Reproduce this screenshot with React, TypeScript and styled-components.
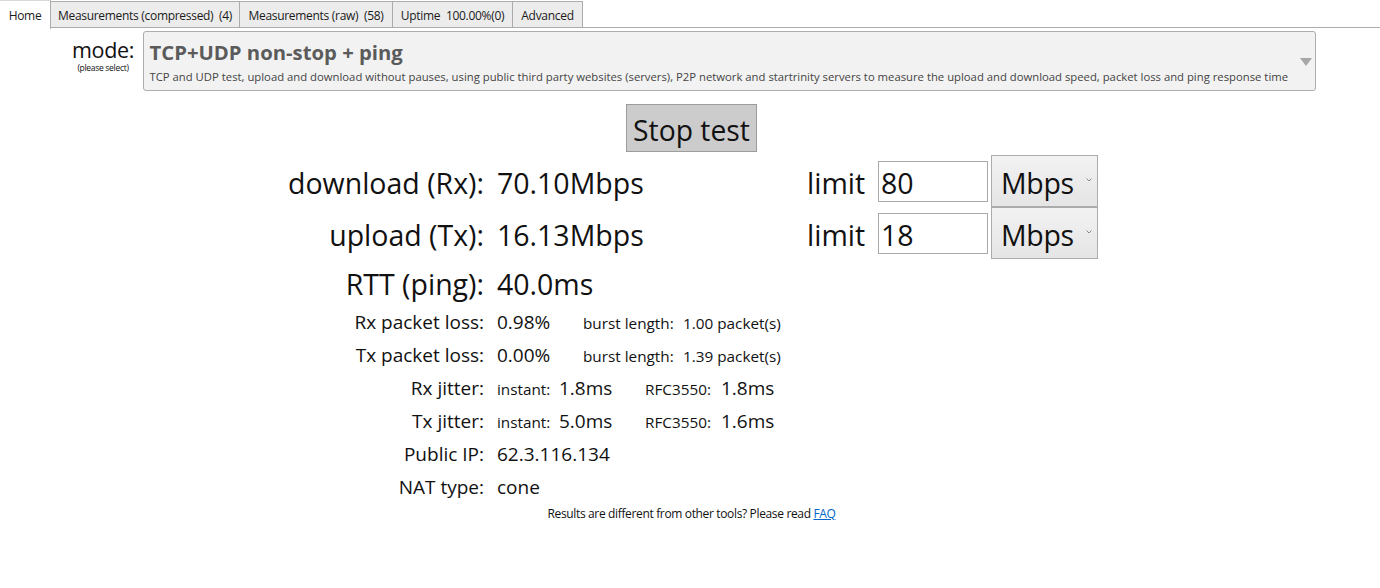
import React from "react";
import styled, { createGlobalStyle } from "styled-components";

const Global = createGlobalStyle`
  html, body { margin: 0; padding: 0; background: #ffffff; }
  body { font-family: "Open Sans", "Noto Sans", sans-serif; color: #111; }
`;

const Page = styled.div`
  width: 1380px;
  display: flex;
  flex-direction: column;
`;

const TabBar = styled.div`
  display: flex;
  align-items: flex-end;
  height: 28px;
`;

const Tab = styled.div<{ $w: number; $active?: boolean }>`
  box-sizing: border-box;
  width: ${(p) => p.$w}px;
  height: ${(p) => (p.$active ? 29 : 27)}px;
  display: flex;
  align-items: center;
  justify-content: center;
  font-size: 12px;
  letter-spacing: -0.3px;
  white-space: pre;
  color: #1a1a1a;
  background: ${(p) => (p.$active ? "#ffffff" : "#ececec")};
  border-top: 1px solid ${(p) => (p.$active ? "#d9d9d9" : "#acacac")};
  border-right: 1px solid #acacac;
  border-bottom: ${(p) => (p.$active ? "none" : "1px solid #acacac")};
  padding-top: ${(p) => (p.$active ? 0 : 1)}px;
  margin-bottom: ${(p) => (p.$active ? -1 : 0)}px;
  position: relative;
`;

const TabFill = styled.div`
  flex: 1;
  height: 1px;
  background: #acacac;
`;

const ModeRow = styled.div`
  align-self: center;
  display: flex;
  gap: 9px;
  margin-top: 3px;
  margin-left: 8px;
`;

const ModeLabel = styled.div`
  width: 61px;
  display: flex;
  flex-direction: column;
  align-items: center;
  padding-top: 6px;
`;

const ModeText = styled.div`
  font-size: 21.5px;
  line-height: 25px;
  letter-spacing: -0.3px;
`;

const ModeHint = styled.div`
  font-size: 8.5px;
  line-height: 12px;
  letter-spacing: -0.3px;
  white-space: nowrap;
`;

const ModeSelect = styled.div`
  box-sizing: border-box;
  width: 1173px;
  height: 60px;
  background: #f2f2f2;
  border: 1px solid #adadad;
  border-radius: 3px;
  padding: 7px 6px 0 6px;
  position: relative;
`;

const ModeTitle = styled.div`
  font-size: 20.3px;
  font-weight: 700;
  line-height: 27px;
  color: #5b5b5b;
`;

const ModeDesc = styled.div`
  font-size: 11.3px;
  line-height: 16px;
  margin-top: 3px;
  color: #444;
  white-space: nowrap;
`;

const ModeArrow = styled.div`
  position: absolute;
  right: 3px;
  top: 26px;
  width: 0;
  height: 0;
  border-left: 6px solid transparent;
  border-right: 6px solid transparent;
  border-top: 8px solid #a6a6a6;
`;

const StopButton = styled.button`
  align-self: center;
  box-sizing: border-box;
  margin-top: 13px;
  margin-left: 3px;
  width: 131px;
  height: 48px;
  background: #cccccc;
  border: 1px solid #9c9c9c;
  font-family: inherit;
  font-size: 28.3px;
  color: #111;
  padding: 3px 0 0;
  white-space: nowrap;
`;

const Results = styled.div`
  align-self: center;
  width: 816px;
  margin-top: 3px;
  display: flex;
  flex-direction: column;
`;

const Row = styled.div<{ $h: number; $shift?: number }>`
  height: ${(p) => p.$h}px;
  display: grid;
  grid-template-columns: 202px 323px 71px 110px 110px;
  align-items: center;
  & > * {
    padding-top: ${(p) => p.$shift ?? 0}px;
  }
`;

const Label = styled.div<{ $size: number }>`
  text-align: right;
  font-size: ${(p) => p.$size}px;
  white-space: nowrap;
`;

const Value = styled.div<{ $size: number }>`
  margin-left: 13px;
  font-size: ${(p) => p.$size}px;
  white-space: nowrap;
  display: flex;
  align-items: baseline;
`;

const Cell = styled.span<{ $w?: number; $size: number }>`
  display: inline-block;
  width: ${(p) => (p.$w ? `${p.$w}px` : "auto")};
  font-size: ${(p) => p.$size}px;
  white-space: nowrap;
`;

const LimitLabel = styled.div`
  font-size: 28.5px;
`;

const LimitInput = styled.input`
  box-sizing: border-box;
  width: 110px;
  height: 41px;
  border: 1px solid #a9a9a9;
  font-family: inherit;
  font-size: 28.5px;
  padding-left: 2px;
  padding-bottom: 0;
  color: #111;
  outline: none;
`;

const UnitSelect = styled.div`
  box-sizing: border-box;
  margin-left: 3px;
  width: 107px;
  height: 52px;
  border: 1px solid #acacac;
  background: linear-gradient(#f2f2f2, #e5e5e5);
  display: flex;
  align-items: center;
  padding-left: 9px;
  font-size: 28.5px;
  letter-spacing: -0.3px;
  position: relative;
`;

const Chevron = styled.svg`
  position: absolute;
  right: 5px;
  top: 22px;
`;

const Footer = styled.div`
  align-self: center;
  margin-top: 2px;
  margin-left: 3px;
  font-size: 12px;
  letter-spacing: -0.35px;
  color: #111;
`;

const FaqLink = styled.a`
  color: #0066cc;
  text-decoration: underline;
`;

function Unit() {
  return (
    <UnitSelect>
      Mbps
      <Chevron width="6" height="4" viewBox="0 0 6 4">
        <path d="M0.5 0.5 L3 3 L5.5 0.5" fill="none" stroke="#888" strokeWidth="1" />
      </Chevron>
    </UnitSelect>
  );
}

const BIG = 28.5;
const MID = 19;
const SMALL = 15.3;

export default function App() {
  return (
    <Page>
      <Global />
      <TabBar>
        <Tab $w={51} $active>Home</Tab>
        <Tab $w={189}>Measurements (compressed)  (4)</Tab>
        <Tab $w={153}>Measurements (raw)  (58)</Tab>
        <Tab $w={120}>Uptime  100.00%(0)</Tab>
        <Tab $w={70}>Advanced</Tab>
        <TabFill />
      </TabBar>

      <ModeRow>
        <ModeLabel>
          <ModeText>mode:</ModeText>
          <ModeHint>(please select)</ModeHint>
        </ModeLabel>
        <ModeSelect>
          <ModeTitle>TCP+UDP non-stop + ping</ModeTitle>
          <ModeDesc>
            TCP and UDP test, upload and download without pauses, using public third party websites (servers), P2P network and startrinity servers to measure the upload and download speed, packet loss and ping response time
          </ModeDesc>
          <ModeArrow />
        </ModeSelect>
      </ModeRow>

      <StopButton>Stop test</StopButton>

      <Results>
        <Row $h={52} $shift={4}>
          <Label $size={BIG}>download (Rx):</Label>
          <Value $size={BIG}>70.10Mbps</Value>
          <LimitLabel>limit</LimitLabel>
          <LimitInput defaultValue="80" />
          <Unit />
        </Row>
        <Row $h={52} $shift={4}>
          <Label $size={BIG}>upload (Tx):</Label>
          <Value $size={BIG}>16.13Mbps</Value>
          <LimitLabel>limit</LimitLabel>
          <LimitInput defaultValue="18" />
          <Unit />
        </Row>
        <Row $h={46} $shift={3}>
          <Label $size={BIG}>RTT (ping):</Label>
          <Value $size={BIG}>40.0ms</Value>
        </Row>
        <Row $h={33}>
          <Label $size={MID}>Rx packet loss:</Label>
          <Value $size={MID}>
            <Cell $w={86} $size={MID}>0.98%</Cell>
            <Cell $w={100} $size={SMALL}>burst length:</Cell>
            <Cell $size={SMALL}>1.00 packet(s)</Cell>
          </Value>
        </Row>
        <Row $h={33}>
          <Label $size={MID}>Tx packet loss:</Label>
          <Value $size={MID}>
            <Cell $w={86} $size={MID}>0.00%</Cell>
            <Cell $w={100} $size={SMALL}>burst length:</Cell>
            <Cell $size={SMALL}>1.39 packet(s)</Cell>
          </Value>
        </Row>
        <Row $h={33}>
          <Label $size={MID}>Rx jitter:</Label>
          <Value $size={MID}>
            <Cell $w={62} $size={SMALL}>instant:</Cell>
            <Cell $w={86} $size={MID}>1.8ms</Cell>
            <Cell $w={76} $size={SMALL}>RFC3550:</Cell>
            <Cell $size={MID}>1.8ms</Cell>
          </Value>
        </Row>
        <Row $h={33}>
          <Label $size={MID}>Tx jitter:</Label>
          <Value $size={MID}>
            <Cell $w={62} $size={SMALL}>instant:</Cell>
            <Cell $w={86} $size={MID}>5.0ms</Cell>
            <Cell $w={76} $size={SMALL}>RFC3550:</Cell>
            <Cell $size={MID}>1.6ms</Cell>
          </Value>
        </Row>
        <Row $h={33}>
          <Label $size={MID}>Public IP:</Label>
          <Value $size={MID}>62.3.116.134</Value>
        </Row>
        <Row $h={33}>
          <Label $size={MID}>NAT type:</Label>
          <Value $size={MID}>cone</Value>
        </Row>
      </Results>

      <Footer>
        Results are different from other tools? Please read <FaqLink href="#">FAQ</FaqLink>
      </Footer>
    </Page>
  );
}
